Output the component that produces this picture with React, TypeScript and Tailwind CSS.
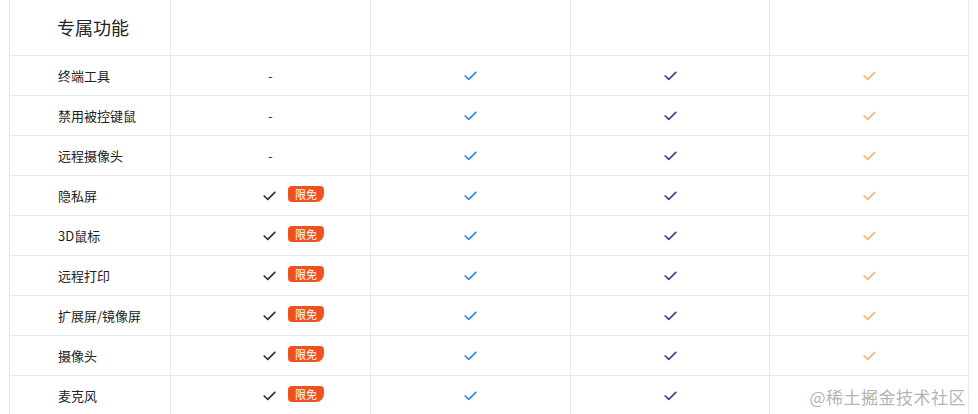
import React from "react";

const rows = [
  { name: "终端工具", free: false },
  { name: "禁用被控键鼠", free: false },
  { name: "远程摄像头", free: false },
  { name: "隐私屏", free: true },
  { name: "3D鼠标", free: true },
  { name: "远程打印", free: true },
  { name: "扩展屏/镜像屏", free: true },
  { name: "摄像头", free: true },
  { name: "麦克风", free: true },
];

function Check({ color }: { color: string }) {
  return (
    <svg width="13" height="10" viewBox="0 0 13 10" fill="none">
      <polyline
        points="1.2,5 4.8,8.4 11.8,1.4"
        stroke={color}
        strokeWidth="1.7"
        strokeLinecap="round"
        strokeLinejoin="round"
      />
    </svg>
  );
}

export default function App() {
  return (
    <div
      className="relative w-[978px] h-[414px] overflow-hidden bg-white text-[#333]"
      style={{ fontFamily: '"Noto Sans CJK SC", "Noto Sans", sans-serif' }}
    >
      <div className="ml-[9px] w-[959px] border-l border-[#e8e8e8] grid grid-cols-[161px_200px_200px_199px_199px]">
        <div className="h-[56px] border-r border-b border-[#e8e8e8] flex items-center pl-[47px] text-[18px] text-[#222]">
          专属功能
        </div>
        <div className="h-[56px] border-r border-b border-[#e8e8e8]" />
        <div className="h-[56px] border-r border-b border-[#e8e8e8]" />
        <div className="h-[56px] border-r border-b border-[#e8e8e8]" />
        <div className="h-[56px] border-r border-b border-[#e8e8e8]" />

        {rows.map((r) => (
          <React.Fragment key={r.name}>
            <div className="h-[40px] border-r border-b border-[#e8e8e8] flex items-center pl-[48px] text-[13px] text-[#222]">
              {r.name}
            </div>
            <div className="h-[40px] border-r border-b border-[#e8e8e8] flex items-center justify-center">
              {r.free ? (
                <div className="flex items-center gap-[12px] ml-[46px]">
                  <Check color="#333333" />
                  <span className="-mt-[3px] h-[16px] px-[7px] flex items-center rounded-[4px] rounded-br-[8px] bg-[#f0521f] text-white text-[11px] leading-none">
                    限免
                  </span>
                </div>
              ) : (
                <span className="text-[13px] text-[#333]">-</span>
              )}
            </div>
            <div className="h-[40px] border-r border-b border-[#e8e8e8] flex items-center justify-center">
              <Check color="#2a8cf0" />
            </div>
            <div className="h-[40px] border-r border-b border-[#e8e8e8] flex items-center justify-center">
              <Check color="#5a3394" />
            </div>
            <div className="h-[40px] border-r border-b border-[#e8e8e8] flex items-center justify-center">
              <Check color="#f3b47c" />
            </div>
          </React.Fragment>
        ))}
      </div>
      <div className="absolute right-[12px] bottom-[5px] text-[17px] text-[#b5b5b5] tracking-[0.5px]">
        @稀土掘金技术社区
      </div>
    </div>
  );
}
